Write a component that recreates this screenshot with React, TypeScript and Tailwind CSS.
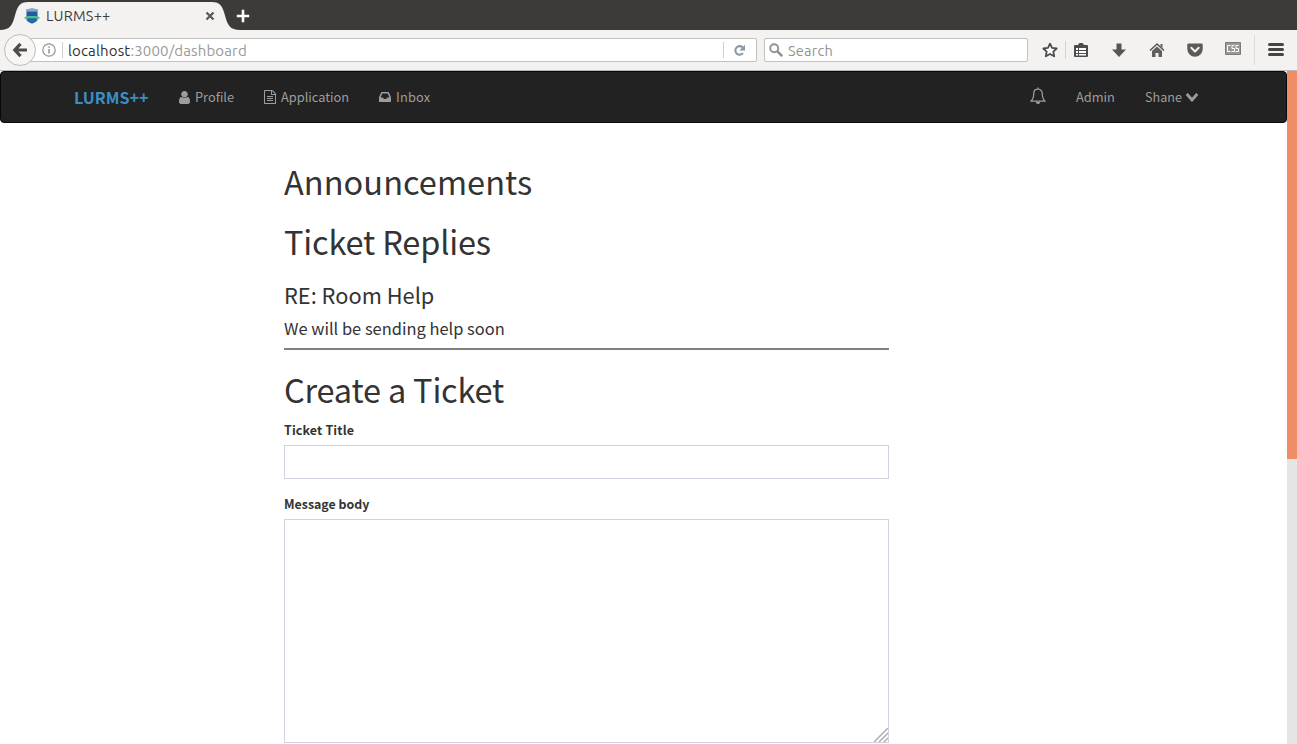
import React from "react";

const sans = "font-['Noto_Sans_CJK_SC','Source_Sans_Pro',sans-serif]";
const chrome = "font-['Ubuntu','Noto_Sans',sans-serif]";

function Favicon() {
  return (
    <svg className="h-4 w-4 shrink-0" viewBox="0 0 16 16">
      <path d="M2.500 1.200 8 .4l5.500.8v9.800c0 2.500-2.800 3.600-5.500 4.500-2.700-.9-5.500-2-5.500-4.500z" fill="#1c5d9f" />
      <path d="M3 1h10v2.600H3z" fill="#8ba5c2" />
      <path d="M3 11h10c-.4 2.200-2.600 3.200-5 4.200-2.400-1-4.600-2-5-4.200z" fill="#1b6bb6" />
      <path d="M.6 9c3.500-1.300 11.300-1.300 14.800 0v1.900c-4-.9-10.800-.9-14.800 0z" fill="#58bf88" />
    </svg>
  );
}

function TabStrip() {
  return (
    <div className="flex h-[30px] shrink-0 bg-[#3c3b37]">
      <div className="relative h-[30px] w-[240px] shrink-0">
        <svg className="absolute inset-0 h-[30px] w-[240px]" viewBox="0 0 240 30">
          <path d="M0 30C10 30 12.500 25 15 15.500 17.500 6 20 2 28 2H212C220 2 222.500 6 225 15.500 227.500 25 230 30 240 30Z" fill="#f4f2f0" />
        </svg>
        <div className="relative flex h-[32px] items-center pl-6">
          <Favicon />
          <span className="ml-[6px] w-[64px] text-[14.500px] tracking-[0.25px] whitespace-nowrap text-[#3c3c3c]">LURMS++</span>
          <svg className="ml-[95px] h-[10px] w-[10px]" viewBox="0 0 10 10">
            <path d="M1.500 1.500l7 7M8.500 1.500l-7 7" stroke="#5b5a57" strokeWidth="2.300" />
          </svg>
        </div>
      </div>
      <svg className="mt-[9px] ml-[-4px] h-[14px] w-[14px]" viewBox="0 0 14 14">
        <path d="M7 .8v12.400M.8 7h12.400" stroke="#fff" strokeWidth="2.600" />
      </svg>
    </div>
  );
}

function Toolbar() {
  return (
    <div className="flex h-[41px] shrink-0 items-start border-b border-[#bab8b5] bg-[#f4f2f0]">
      <div className="relative z-10 mt-1 ml-1 flex h-8 w-8 shrink-0 items-center justify-center rounded-full border border-[#bdbbb8] bg-[#f7f6f5]">
        <svg className="h-4 w-4" viewBox="0 0 16 16">
          <path d="M8.500 1.800 2.800 8l5.700 6.200M3.500 8H15" fill="none" stroke="#4c4c4c" strokeWidth="3.200" />
        </svg>
      </div>
      <div className="mt-2 ml-[-6px] flex h-6 w-[727px] shrink-0 items-center rounded-r-[2px] border border-[#c3c1be] bg-white pl-[11px]">
        <svg className="h-[14px] w-[14px] shrink-0" viewBox="0 0 14 14">
          <circle cx="7" cy="7" r="6.200" fill="none" stroke="#929292" strokeWidth="1.200" />
          <path d="M7 6v4.500M7 3.300v1.500" stroke="#929292" strokeWidth="1.500" />
        </svg>
        <div className="ml-[6px] h-4 w-px bg-[#cfcfcf]" />
        <span className="mt-px ml-[5px] w-[190px] text-[15px] leading-[22px] tracking-[0.150px] whitespace-nowrap text-[#999]">
          <span className="text-[#303030]">localhost</span>:3000/dashboard
        </span>
        <div className="ml-auto h-4 w-px bg-[#cfcfcf]" />
        <svg className="mr-[10px] ml-[9px] h-[13px] w-[13px] shrink-0" viewBox="0 0 13 13">
          <path d="M9.600 3.300A4.300 4.300 0 1 0 10 9.200" fill="none" stroke="#8b98a6" strokeWidth="2.100" />
          <path d="M12 .8v5.700H6.300z" fill="#8b98a6" />
        </svg>
      </div>
      <div className="mt-2 ml-[7px] flex h-6 w-[264px] shrink-0 items-center rounded-[2px] border border-[#c3c1be] bg-white pl-1">
        <svg className="h-[14px] w-[14px]" viewBox="0 0 14 14">
          <circle cx="5.200" cy="5.200" r="4" fill="none" stroke="#929292" strokeWidth="1.900" />
          <path d="M8.200 8.200l5 5" stroke="#929292" strokeWidth="2.600" />
        </svg>
        <span className="mt-px ml-[5px] text-[14.500px] leading-[22px] tracking-[0.250px] text-[#929292]">Search</span>
      </div>
      <div className="mt-[12px] ml-[14px] flex h-4 shrink-0 items-center">
        <svg className="h-4 w-4" viewBox="0 0 16 16">
          <path d="m8 1.700 2 4.200 4.700.6-3.400 3.200.9 4.600L8 12l-4.200 2.300.9-4.600L1.300 6.500 6 5.900z" fill="#fff" stroke="#4c4c4c" strokeWidth="1.800" strokeLinejoin="round" />
        </svg>
        <div className="ml-[7px] h-[18px] w-px bg-[#d5d3d1]" />
        <svg className="ml-[7px] h-4 w-4" viewBox="0 0 16 16">
          <path d="M2 4h12v10H2z" fill="#4c4c4c" stroke="#4c4c4c" strokeWidth="2" strokeLinejoin="round" />
          <path d="M5 4V2.500L6.500 1h3L11 2.500V4z" fill="#4c4c4c" />
          <path d="M3 6h2v2H3zM6 6h7v2H6zM3 9h2v2H3zM6 9h7v2H6zM3 12h2v1.500H3zM6 12h7v1.500H6z" fill="#fff" />
        </svg>
        <svg className="ml-[22px] h-4 w-4" viewBox="0 0 16 16">
          <path d="M5.500 1.500h5v6H15L8 15 1 7.500h4.500z" fill="#565656" />
        </svg>
        <svg className="ml-[22px] h-4 w-4" viewBox="0 0 16 16">
          <path d="M1 8.500 8 2l7 6.500" fill="none" stroke="#565656" strokeWidth="1.500" />
          <path d="M11.500 2h2v4l-2-2zM8 4.500 13 9v6H9.500v-4h-3v4H3V9z" fill="#5f5f5f" />
        </svg>
        <svg className="ml-[22px] h-4 w-4" viewBox="0 0 16 16">
          <path d="M1.500 1.500h13q1.200 0 1.200 1.200V7a7.700 7.700 0 0 1-15.400 0V2.700q0-1.200 1.200-1.200z" fill="#5a5a5a" />
          <path d="m4.300 5.800 3.700 3.700 3.700-3.700" fill="none" stroke="#f4f2f0" strokeWidth="2" strokeLinecap="round" strokeLinejoin="round" />
        </svg>
        <svg className="mb-[3px] ml-[22px] h-[13px] w-4" viewBox="0 0 16 13">
          <path d="M.5.500h15v12H.5z" fill="#989898" stroke="#7b7b7b" />
          <path d="M5.500 3.500h-3v6h3M9.500 3.500H7v3h2.500v3H6.500M13.500 3.500H11v3h2.500v3h-3" fill="none" stroke="#fff" />
        </svg>
      </div>
      <div className="mt-[5px] ml-[13px] h-[30px] w-px shrink-0 bg-[#dddbd9]" />
      <div className="mt-[13px] ml-[13px] flex w-4 shrink-0 flex-col gap-[2px]">
        <div className="h-[3px] rounded-full bg-[#444]" />
        <div className="h-[3px] rounded-full bg-[#444]" />
        <div className="h-[3px] rounded-full bg-[#444]" />
      </div>
    </div>
  );
}

function NavBar() {
  return (
    <nav className="flex h-[52px] items-center rounded-[4px] border border-[#080808] bg-[#222] pl-[73px] text-[12.800px] text-[#9d9d9d]">
      <span className="w-[76px] text-[16.100px] font-bold whitespace-nowrap text-[#3a8fc4]">LURMS++</span>
      <div className="ml-[29px] flex w-[55px] items-center">
        <svg className="h-[13px] w-[11px] shrink-0" viewBox="256 128 1280 1536" preserveAspectRatio="none" fill="currentColor">
          <path d="M1536 1399q0 109-62.500 187t-150.500 78h-854q-88 0-150.500-78t-62.500-187q0-85 8.500-160.500t31.500-152 58.500-131 94-89 134.500-34.500q131 128 313 128t313-128q76 0 134.500 34.500t94 89 58.500 131 31.500 152 8.500 160.500zm-256-887q0 159-112.500 271.500t-271.500 112.500-271.500-112.500-112.500-271.500 112.500-271.500 271.500-112.500 271.500 112.500 112.500 271.500z" />
        </svg>
        <span className="ml-[5px] whitespace-nowrap">Profile</span>
      </div>
      <div className="ml-[30px] flex w-[85px] items-center">
        <svg className="h-[14px] w-[12px] shrink-0" viewBox="128 0 1536 1792" fill="currentColor">
          <path d="M1596 380q28 28 48 76t20 88v1152q0 40-28 68t-68 28h-1344q-40 0-68-28t-28-68v-1600q0-40 28-68t68-28h896q40 0 88 20t76 48zm-444-244v376h376q-10-29-22-41l-313-313q-12-12-41-22zm384 1528v-1024h-416q-40 0-68-28t-28-68v-416h-768v1536h1280zm-1024-864q0-14 9-23t23-9h704q14 0 23 9t9 23v64q0 14-9 23t-23 9h-704q-14 0-23-9t-9-23v-64zm736 224q14 0 23 9t9 23v64q0 14-9 23t-23 9h-704q-14 0-23-9t-9-23v-64q0-14 9-23t23-9h704zm0 256q14 0 23 9t9 23v64q0 14-9 23t-23 9h-704q-14 0-23-9t-9-23v-64q0-14 9-23t23-9h704z" />
        </svg>
        <span className="ml-[5px] whitespace-nowrap">Application</span>
      </div>
      <div className="ml-[30px] flex w-[52px] items-center">
        <svg className="h-[10px] w-[12px] shrink-0" viewBox="128 256 1536 1280" fill="currentColor">
          <path d="M1151 960h316q-1-3-2.500-8t-2.500-8l-212-496h-708l-212 496q-1 2-2.500 8t-2.500 8h316l95 192h320zm513 30v482q0 26-19 45t-45 19h-1408q-26 0-45-19t-19-45v-482q0-62 25-123l238-552q10-25 36.500-42t52.500-17h832q26 0 52.500 17t36.500 42l238 552q25 61 25 123z" />
        </svg>
        <span className="ml-[5px] tracking-[0.2px] whitespace-nowrap">Inbox</span>
      </div>
      <svg className="mr-[30px] mb-[2px] ml-auto h-[18px] w-4" viewBox="0 0 16 18">
        <path d="M8 2.200c-3 0-4.300 2.200-4.300 4.800 0 3.800-.8 5.500-2.900 7.200h14.400c-2.100-1.700-2.900-3.400-2.900-7.200 0-2.600-1.300-4.800-4.300-4.800zM8 .5v1.700" fill="none" stroke="currentColor" strokeWidth="1.250" strokeLinejoin="round" />
        <path d="M5.800 14.800h4.400a2.200 2.200 0 0 1-4.400 0z" fill="currentColor" />
      </svg>
      <span className="mr-[30px] w-[39px] whitespace-nowrap">Admin</span>
      <div className="mr-[88px] flex w-[53px] items-center">
        <span className="w-[41px] text-[12.600px] whitespace-nowrap">Shane</span>
        <svg className="mt-[2px] h-[9px] w-3 shrink-0" viewBox="90 533 1612 1035" preserveAspectRatio="none" fill="currentColor">
          <path d="M1683 808l-742 741q-19 19-45 19t-45-19l-742-741q-19-19-19-45.500t19-45.500l166-165q19-19 45-19t45 19l531 531 531-531q19-19 45-19t45 19l166 165q19 19 19 45.500t-19 45.500z" />
        </svg>
      </div>
    </nav>
  );
}

const h1 = "text-[32.500px] leading-[40px] whitespace-nowrap";

export default function App() {
  return (
    <div className="flex h-[744px] w-[1297px] flex-col overflow-hidden bg-white">
      <header className={"shrink-0 " + chrome}>
        <TabStrip />
        <Toolbar />
      </header>
      <div className="flex min-h-0 flex-1">
        <div className={"min-w-0 flex-1 overflow-hidden text-[#333] " + sans}>
          <NavBar />
          <main className="ml-[284px] w-[605px] pt-[38px]">
            <h1 className={"tracking-[0.06px] " + h1}>Announcements</h1>
            <h1 className={"mt-5 tracking-[-0.17px] " + h1}>Ticket Replies</h1>
            <h3 className="mt-[21px] text-[21.800px] leading-[26px] whitespace-nowrap">RE: Room Help</h3>
            <p className="mt-[9px] text-[16.450px] leading-[22px] whitespace-nowrap">We will be sending help soon</p>
            <div className="mt-[9px] h-[2px] bg-[#808080]" />
            <h1 className={"mt-[19px] tracking-[-0.2px] " + h1}>Create a Ticket</h1>
            <label htmlFor="title" className="mt-[12px] block text-[12.500px] leading-[18px] font-bold tracking-[0.120px]">Ticket Title</label>
            <input id="title" className="mt-[6px] block h-[34px] w-full border border-[#d2d3df] px-3 outline-none" />
            <label htmlFor="body" className="mt-[16px] block text-[12.400px] leading-[18px] font-bold">Message body</label>
            <div className="relative mt-[6px]">
              <textarea id="body" className="block h-[224px] w-full resize-none border border-[#d2d3df] px-3 outline-none" />
              <svg className="absolute right-px bottom-px h-[14px] w-[14px]" viewBox="0 0 14 14">
                <path d="M0 14 14 0M5 14l9-9M10 14l4-4" stroke="#adadad" strokeWidth="1.500" />
              </svg>
            </div>
          </main>
        </div>
        <div className="w-[10px] shrink-0 bg-[#e5e5e5]">
          <div className="h-[388px] bg-[#f08d66]" />
        </div>
      </div>
    </div>
  );
}
